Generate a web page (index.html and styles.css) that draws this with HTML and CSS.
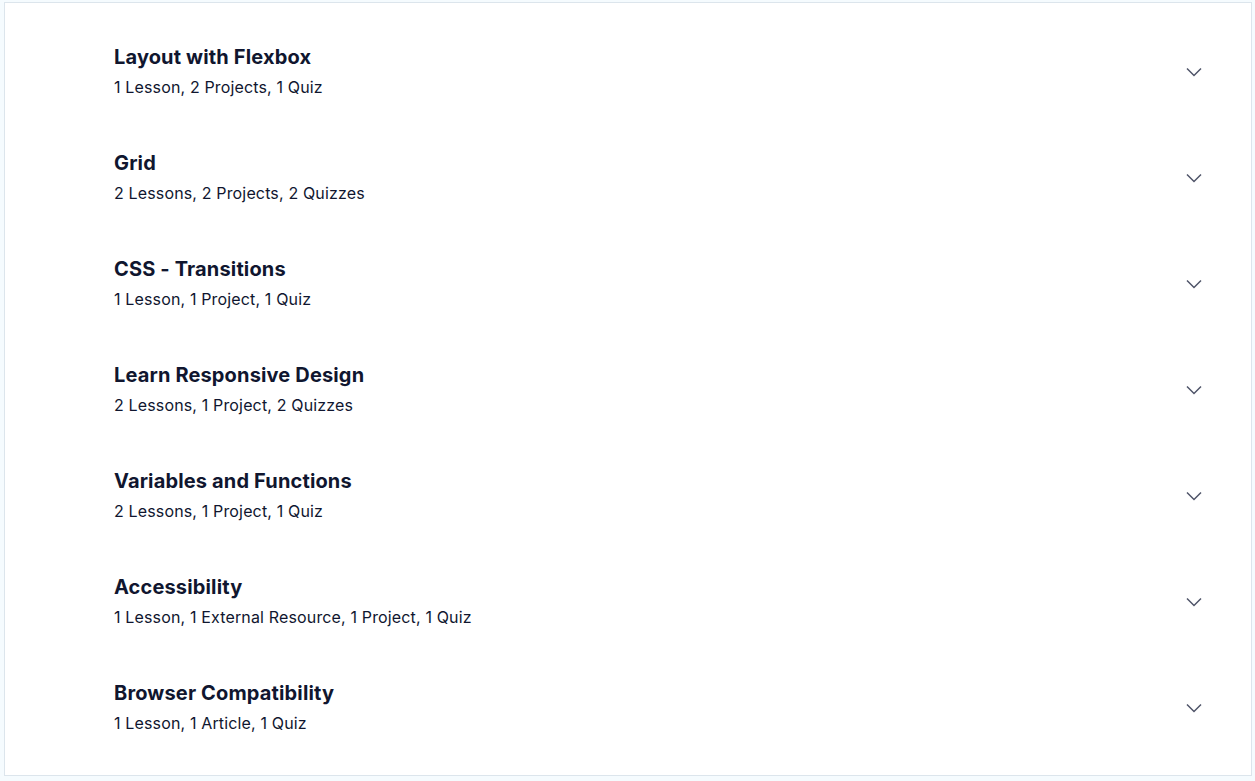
FILE: index.html
```html
<!DOCTYPE html>
<html>
<head>
<meta charset="utf-8">
<link rel="stylesheet" href="styles.css">
</head>
<body>
<div class="card">
  <div class="row">
    <div class="text"><div class="title">Layout with Flexbox</div><div class="sub">1 Lesson, 2 Projects, 1 Quiz</div></div>
    <svg class="chev" width="16" height="10" viewBox="0 0 16 10"><path d="M1 1.5 L8 8.5 L15 1.5" fill="none" stroke="#4f5468" stroke-width="1.5"/></svg>
  </div>
  <div class="row">
    <div class="text"><div class="title">Grid</div><div class="sub">2 Lessons, 2 Projects, 2 Quizzes</div></div>
    <svg class="chev" width="16" height="10" viewBox="0 0 16 10"><path d="M1 1.5 L8 8.5 L15 1.5" fill="none" stroke="#4f5468" stroke-width="1.5"/></svg>
  </div>
  <div class="row">
    <div class="text"><div class="title">CSS - Transitions</div><div class="sub">1 Lesson, 1 Project, 1 Quiz</div></div>
    <svg class="chev" width="16" height="10" viewBox="0 0 16 10"><path d="M1 1.5 L8 8.5 L15 1.5" fill="none" stroke="#4f5468" stroke-width="1.5"/></svg>
  </div>
  <div class="row">
    <div class="text"><div class="title">Learn Responsive Design</div><div class="sub">2 Lessons, 1 Project, 2 Quizzes</div></div>
    <svg class="chev" width="16" height="10" viewBox="0 0 16 10"><path d="M1 1.5 L8 8.5 L15 1.5" fill="none" stroke="#4f5468" stroke-width="1.5"/></svg>
  </div>
  <div class="row">
    <div class="text"><div class="title">Variables and Functions</div><div class="sub">2 Lessons, 1 Project, 1 Quiz</div></div>
    <svg class="chev" width="16" height="10" viewBox="0 0 16 10"><path d="M1 1.5 L8 8.5 L15 1.5" fill="none" stroke="#4f5468" stroke-width="1.5"/></svg>
  </div>
  <div class="row">
    <div class="text"><div class="title">Accessibility</div><div class="sub">1 Lesson, 1 External Resource, 1 Project, 1 Quiz</div></div>
    <svg class="chev" width="16" height="10" viewBox="0 0 16 10"><path d="M1 1.5 L8 8.5 L15 1.5" fill="none" stroke="#4f5468" stroke-width="1.5"/></svg>
  </div>
  <div class="row">
    <div class="text"><div class="title">Browser Compatibility</div><div class="sub">1 Lesson, 1 Article, 1 Quiz</div></div>
    <svg class="chev" width="16" height="10" viewBox="0 0 16 10"><path d="M1 1.5 L8 8.5 L15 1.5" fill="none" stroke="#4f5468" stroke-width="1.5"/></svg>
  </div>
</div>
</body>
</html>
```
FILE: styles.css
```css
html, body {
  margin: 0;
  background: #f5fbfe;
}
body {
  padding: 2px 3px 3px 4px;
  font-family: "Inter", "Noto Sans", sans-serif;
  color: #10162f;
}
.card {
  background: #fff;
  border: 1px solid #dce5ec;
  padding: 16px 0;
  height: 774px;
  box-sizing: border-box;
}
.row {
  height: 106px;
  display: flex;
  align-items: center;
  justify-content: space-between;
  padding: 0 49px 0 109px;
}
.text {
  margin-bottom: 2px;
}
.title {
  font-size: 20px;
  font-weight: 700;
  line-height: 28px;
  letter-spacing: 0.15px;
}
.sub {
  font-size: 16px;
  line-height: 24px;
  margin-top: 4px;
  letter-spacing: 0.15px;
}
.chev {
  display: block;
}
```
